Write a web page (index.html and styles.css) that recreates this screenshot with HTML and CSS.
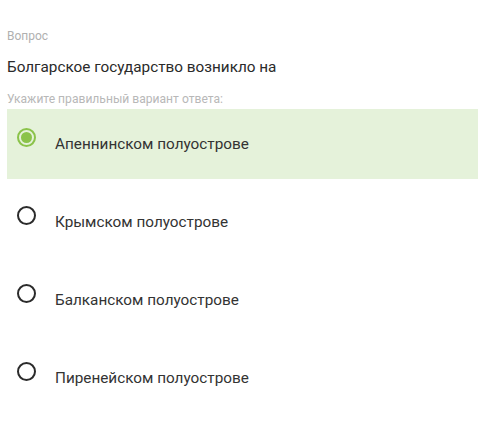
FILE: index.html
```html
<!DOCTYPE html>
<html lang="ru">
<head>
<meta charset="utf-8">
<link rel="stylesheet" href="styles.css">
</head>
<body>
<div class="quiz">
  <div class="caption">Вопрос</div>
  <div class="question">Болгарское государство возникло на</div>
  <div class="hint">Укажите правильный вариант ответа:</div>
  <div class="options">
    <div class="option selected">
      <span class="radio"><span class="dot"></span></span>
      <span class="label">Апеннинском полуострове</span>
    </div>
    <div class="option">
      <span class="radio"></span>
      <span class="label">Крымском полуострове</span>
    </div>
    <div class="option">
      <span class="radio"></span>
      <span class="label">Балканском полуострове</span>
    </div>
    <div class="option">
      <span class="radio"></span>
      <span class="label">Пиренейском полуострове</span>
    </div>
  </div>
</div>
</body>
</html>
```

FILE: styles.css
```css
html, body {
  margin: 0;
  padding: 0;
  background: #fff;
}
body {
  font-family: Roboto, "Liberation Sans", Arial, sans-serif;
  color: #333;
}
.quiz {
  padding: 28px 0 0 7px;
}
.caption {
  font-size: 12px;
  line-height: 16px;
  color: #b0b0b0;
}
.question {
  font-size: 15.3px;
  line-height: 20px;
  margin-top: 13px;
  color: #2a2a2a;
}
.hint {
  font-size: 12.1px;
  line-height: 16px;
  margin-top: 14px;
  color: #b8b8b8;
}
.options {
  margin-top: 2px;
  display: flex;
  flex-direction: column;
  gap: 8px;
}
.option {
  height: 70px;
  display: flex;
  align-items: flex-start;
  padding-left: 10px;
  box-sizing: border-box;
}
.option.selected {
  background: #e5f2da;
}
.radio {
  width: 19px;
  height: 19px;
  box-sizing: border-box;
  border: 2px solid #2b2b2b;
  border-radius: 50%;
  margin-top: 19px;
  display: flex;
  align-items: center;
  justify-content: center;
  flex: none;
}
.selected .radio {
  border-color: #8bc34a;
  border-width: 2px;
}
.dot {
  width: 11px;
  height: 11px;
  border-radius: 50%;
  background: #8bc34a;
}
.label {
  font-size: 15.3px;
  line-height: 20px;
  margin-top: 25px;
  margin-left: 19px;
  color: #333;
}
```
